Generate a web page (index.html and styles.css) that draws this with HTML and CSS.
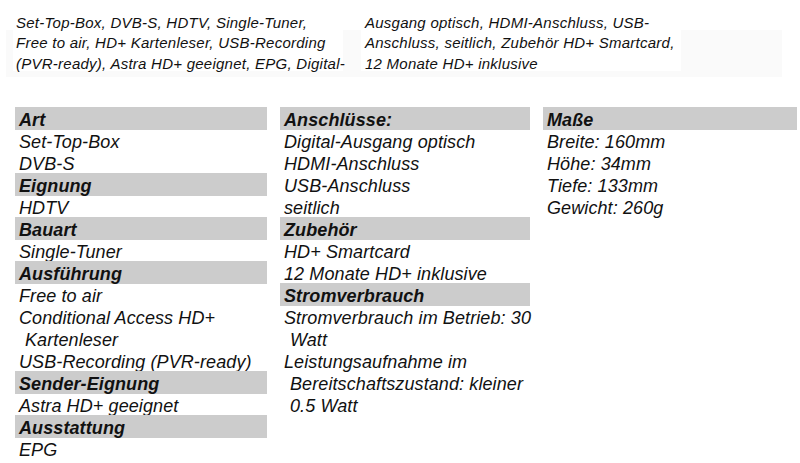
FILE: index.html
```html
<!DOCTYPE html>
<html lang="de">
<head>
<meta charset="utf-8">
<title>Set-Top-Box Datenblatt</title>
<link rel="stylesheet" href="styles.css">
</head>
<body>
<div class="top">
  <p class="blurb blurb-left">Set-Top-Box, DVB-S, HDTV, Single-Tuner,<br>Free to air, HD+ Kartenleser, USB-Recording<br>(PVR-ready), Astra HD+ geeignet, EPG, Digital-</p>
  <p class="blurb blurb-right">Ausgang optisch, HDMI-Anschluss, USB-<br>Anschluss, seitlich, Zubehör HD+ Smartcard,<br>12 Monate HD+ inklusive</p>
</div>
<div class="specs">
  <div class="col">
    <div class="head">Art</div>
    <div class="val">Set-Top-Box</div>
    <div class="val">DVB-S</div>
    <div class="head">Eignung</div>
    <div class="val">HDTV</div>
    <div class="head">Bauart</div>
    <div class="val">Single-Tuner</div>
    <div class="head">Ausführung</div>
    <div class="val">Free to air</div>
    <div class="val">Conditional Access HD+<br>Kartenleser</div>
    <div class="val">USB-Recording (PVR-ready)</div>
    <div class="head">Sender-Eignung</div>
    <div class="val">Astra HD+ geeignet</div>
    <div class="head">Ausstattung</div>
    <div class="val">EPG</div>
  </div>
  <div class="col">
    <div class="head">Anschlüsse:</div>
    <div class="val">Digital-Ausgang optisch</div>
    <div class="val">HDMI-Anschluss</div>
    <div class="val">USB-Anschluss</div>
    <div class="val">seitlich</div>
    <div class="head">Zubehör</div>
    <div class="val">HD+ Smartcard</div>
    <div class="val">12 Monate HD+ inklusive</div>
    <div class="head">Stromverbrauch</div>
    <div class="val">Stromverbrauch im Betrieb: 30<br>Watt</div>
    <div class="val">Leistungsaufnahme im<br>Bereitschaftszustand: kleiner<br>0.5 Watt</div>
  </div>
  <div class="col">
    <div class="head">Maße</div>
    <div class="val">Breite: 160mm</div>
    <div class="val">Höhe: 34mm</div>
    <div class="val">Tiefe: 133mm</div>
    <div class="val">Gewicht: 260g</div>
  </div>
</div>
</body>
</html>
```
FILE: styles.css
```css
* { box-sizing: border-box; }

html, body {
  margin: 0;
  padding: 0;
  background: #ffffff;
}

body {
  width: 800px;
  height: 463px;
  overflow: hidden;
  font-family: "Liberation Sans", Arial, sans-serif;
  font-style: italic;
  color: #111111;
}

.top {
  display: flex;
  align-items: flex-start;
  gap: 18px;
  height: 107px;
  padding: 12px 0 0 13px;
  background: linear-gradient(#fafafa, #fafafa) no-repeat 6px 30px / 776px 47px;
}

.blurb {
  margin: 0;
  height: 59px;
  padding-top: 1px;
  background: #ffffff;
  font-size: 15px;
  letter-spacing: 0.25px;
  line-height: 20.3px;
  white-space: nowrap;
}

.blurb-left {
  width: 330px;
  padding-left: 3px;
}

.blurb-right {
  width: 320px;
  padding-left: 4px;
}

.specs {
  display: grid;
  grid-template-columns: 252px 250px 254px;
  column-gap: 13px;
  padding-left: 15px;
  align-items: start;
}

.col {
  display: flex;
  flex-direction: column;
}

.head,
.val {
  font-size: 18px;
  letter-spacing: 0.1px;
  line-height: 22px;
  white-space: nowrap;
  padding-top: 2px;
}

.head {
  background: #cccccc;
  font-weight: bold;
  padding-left: 4px;
  height: 23px;
  margin-bottom: -1px;
}

.val {
  padding-left: 10px;
  text-indent: -6px;
  margin-bottom: -2px;
}

.col > .val:last-child {
  margin-bottom: 0;
}
```
